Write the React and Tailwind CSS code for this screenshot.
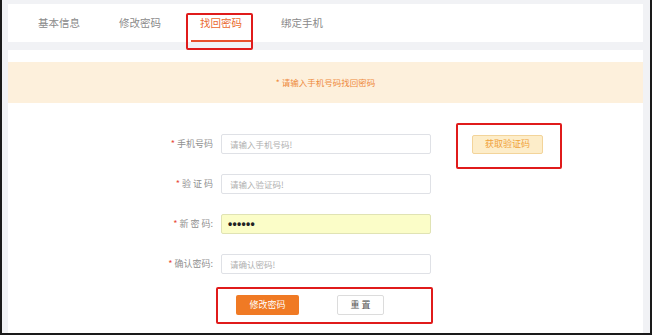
import React from 'react';

const tabs = ['基本信息', '修改密码', '找回密码', '绑定手机'];

const fields = [
    { label: '手机号码', placeholder: '请输入手机号码!' },
    { label: '验 证 码', placeholder: '请输入验证码!' },
    { label: '新 密 码:', password: true },
    { label: '确认密码:', placeholder: '请确认密码!' }
];

const App = () => {
    return (
        <div
            className="relative w-[652px] h-[335px] overflow-hidden bg-[#f1f2f5] border-x-2 border-b-2 border-[#1a1a1a] pl-[6px] pr-[7px] pt-[4px] flex flex-col"
            style={{ fontFamily: '"Noto Sans CJK SC", "Noto Sans", sans-serif' }}
        >
            {/* Tabs */}
            <div className="h-[38px] bg-white flex items-stretch pl-[21px] gap-[21px] shrink-0">
                {tabs.map((t, i) => (
                    <div
                        key={t}
                        className={
                            i === 2
                                ? 'w-[60px] flex items-center justify-center text-[10.5px] text-[#ea6a30] border-b-2 border-[#e8502c] pt-[2px]'
                                : 'w-[60px] flex items-center justify-center text-[10.5px] text-[#8a8a8a]'
                        }
                    >
                        {t}
                    </div>
                ))}
            </div>

            {/* Content */}
            <div className="mt-[8px] flex-1 bg-white pt-[12px]">
                <div className="h-[41px] bg-[#fdf0dc] flex items-center justify-center text-[8.5px] text-[#ee8a3c]">
                    <span className="mr-[2px]">*</span>请输入手机号码找回密码
                </div>

                <div className="mt-[31px] flex flex-col gap-[20px]">
                    {fields.map((f, i) => (
                        <div key={f.label} className="flex items-center h-[20px]">
                            <label className="ml-[125px] w-[80px] text-right text-[9px] text-[#8f8f8f] whitespace-pre">
                                <span className="text-[#e84a3a] mr-[2px]">*</span>
                                {f.label}
                            </label>
                            {f.password ? (
                                <div className="ml-[8px] w-[210px] h-[20px] rounded-[2px] border border-[#e0e3b4] bg-[#fbfdc8] px-[6px] flex items-center font-['Liberation_Sans',sans-serif] text-[12px] font-bold text-[#222] tracking-[0.3px]">
                                    ••••••
                                </div>
                            ) : (
                                <input
                                    type="text"
                                    readOnly
                                    placeholder={f.placeholder}
                                    className="ml-[8px] w-[210px] h-[20px] rounded-[2px] border border-[#dfe1e6] bg-white px-[8px] text-[8.5px] text-[#333] placeholder:text-[#b0b0b0] outline-none"
                                />
                            )}
                            {i === 0 && (
                                <button className="ml-[41px] w-[71px] h-[19px] rounded-[2px] border border-[#f3d49a] bg-[#fdedc9] text-[9px] text-[#f0a23a]">
                                    获取验证码
                                </button>
                            )}
                        </div>
                    ))}
                </div>

                <div className="mt-[21px] flex items-center pl-[228px] gap-[38px]">
                    <button className="w-[63px] h-[20px] rounded-[2px] bg-[#f07a24] text-[9px] text-white">
                        修改密码
                    </button>
                    <button className="w-[47px] h-[20px] rounded-[2px] border border-[#dcdcdc] bg-white text-[9px] text-[#555] whitespace-pre">
                        重 置
                    </button>
                </div>
            </div>

            {/* Annotation boxes */}
            <div className="absolute left-[184px] top-[13px] w-[67px] h-[37px] border-2 border-[#e01b1b] rounded-[2px] pointer-events-none" />
            <div className="absolute left-[454px] top-[123px] w-[106px] h-[46px] border-2 border-[#e01b1b] rounded-[2px] pointer-events-none" />
            <div className="absolute left-[214px] top-[287px] w-[217px] h-[37px] border-2 border-[#e01b1b] rounded-[2px] pointer-events-none" />
        </div>
    );
};

export default App;
